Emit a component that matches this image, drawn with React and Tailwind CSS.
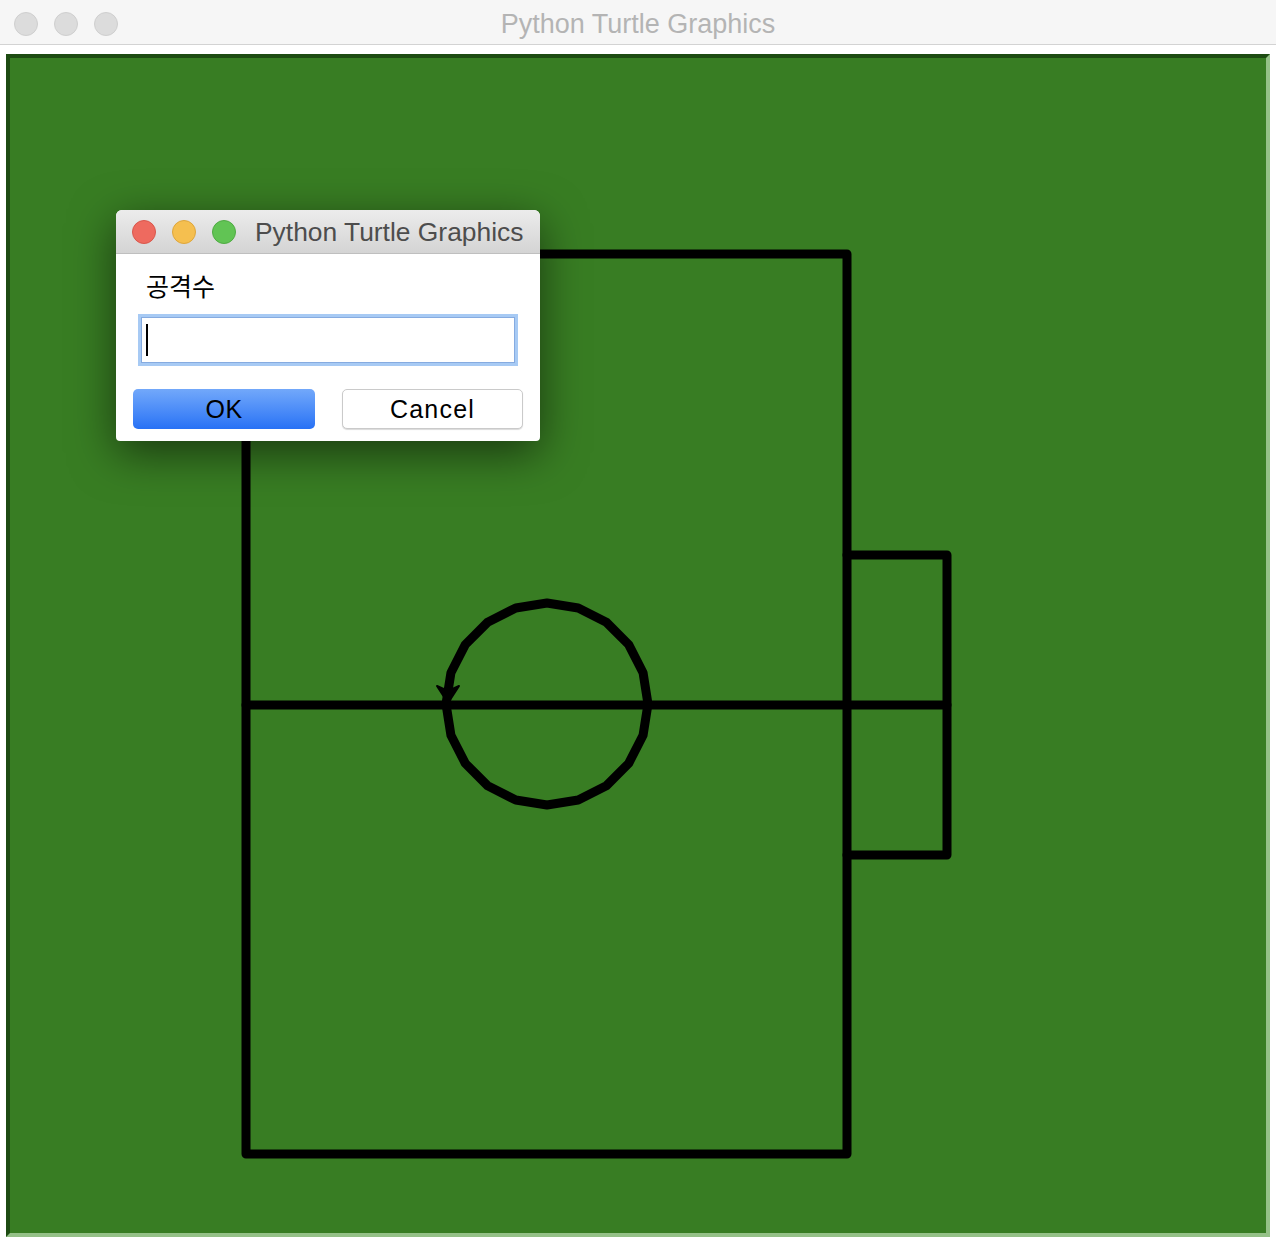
import React from "react";

function Light({ color, border }) {
  return (
    <div
      className="w-[24px] h-[24px] rounded-full border"
      style={{ backgroundColor: color, borderColor: border }}
    />
  );
}

function circlePoints(cx, cy, r, n) {
  const pts = [];
  for (let k = 0; k <= n; k++) {
    const a = (k * 2 * Math.PI) / n;
    pts.push(`${(cx + r * Math.cos(a)).toFixed(2)},${(cy + r * Math.sin(a)).toFixed(2)}`);
  }
  return pts.join(" ");
}

export default function App() {
  return (
    <div className="relative w-[1276px] h-[1244px] overflow-hidden bg-white font-['Liberation_Sans','Noto_Sans_CJK_KR',sans-serif]">
      {/* main window title bar */}
      <div className="h-[45px] pt-[3px] bg-[#f6f6f6] border-b border-[#d3d3d3] grid grid-cols-[1fr_auto_1fr] items-center">
        <div className="flex items-center gap-[16px] pl-[14px]">
          <Light color="#dcdcdc" border="#cfcfcf" />
          <Light color="#dcdcdc" border="#cfcfcf" />
          <Light color="#dcdcdc" border="#cfcfcf" />
        </div>
        <div className="text-[27px] leading-none text-[#b4b4b4] pt-[2px]">Python Turtle Graphics</div>
        <div />
      </div>

      {/* canvas */}
      <div className="pt-[9px] px-[6px]">
        <div className="relative w-[1264px] h-[1183px] bg-[#387d23] border-4 border-t-[#1d4b12] border-l-[#1d4b12] border-r-[#95c188] border-b-[#95c188]">
          <svg
            className="absolute left-0 top-0"
            width="1256"
            height="1175"
            viewBox="10 58 1256 1175"
          >
            <g fill="none" stroke="#000" strokeWidth="9" strokeLinejoin="round" strokeLinecap="round">
              <polyline points="246,254 847,254 847,1154 246,1154 246,254" />
              <line x1="246" y1="705" x2="947" y2="705" />
              <polyline points="847,555 947,555 947,855 847,855" />
              <polyline points={circlePoints(547, 704, 101, 20)} />
            </g>
            <polygon points="448,703 437,686 448,691 459,686" fill="#000" stroke="#000" strokeWidth="2" strokeLinejoin="round" />
          </svg>
        </div>
      </div>

      {/* dialog */}
      <div className="absolute left-[116px] top-[210px] w-[424px] bg-white rounded-t-[6px] rounded-b-[4px] overflow-hidden shadow-[0_12px_45px_rgba(0,0,0,0.55)]">
        <div className="h-[44px] bg-gradient-to-b from-[#ececec] to-[#d4d4d4] border-b border-[#bfbfbf] flex items-center pl-[16px]">
          <div className="flex items-center gap-[16px]">
            <Light color="#ee6a5f" border="#d9574c" />
            <Light color="#f5bf4f" border="#dea63c" />
            <Light color="#61c454" border="#4fab43" />
          </div>
          <div className="ml-[19px] text-[26.4px] leading-none text-[#4d4d4d] pt-[2px]">Python Turtle Graphics</div>
        </div>
        <div className="pt-[15px] pb-[12px] flex flex-col">
          <div className="pl-[30px] h-[29px] text-[25px] leading-[32px] text-black font-['Noto_Sans_CJK_KR',sans-serif]">공격수</div>
          <div className="mt-[16px] ml-[22px] w-[380px] h-[52px] border-[3px] border-[#a7caf4] bg-white">
            <div className="w-full h-full border border-[#86abe0] flex items-center pl-[4px]">
              <div className="w-[2px] h-[32px] bg-black" />
            </div>
          </div>
          <div className="mt-[23px] flex pl-[17px] gap-[27px]">
            <div className="w-[182px] h-[40px] rounded-[5px] bg-gradient-to-b from-[#72a8fa] to-[#2771f5] flex items-center justify-center text-[25px] tracking-[0.5px] text-black leading-none">
              OK
            </div>
            <div className="w-[181px] h-[40px] rounded-[5px] bg-white border border-[#cacaca] shadow-[0_1px_1px_rgba(0,0,0,0.15)] flex items-center justify-center text-[25px] tracking-[1.2px] text-black leading-none">
              Cancel
            </div>
          </div>
        </div>
      </div>
    </div>
  );
}
